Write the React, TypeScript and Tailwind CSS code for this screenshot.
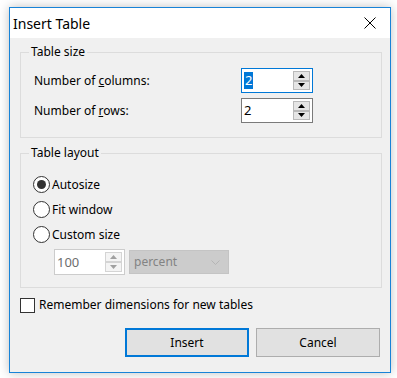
import React from 'react';

const font = { fontFamily: '"Noto Sans", "Open Sans", sans-serif' };

function Arrow({ up, disabled }: { up?: boolean; disabled?: boolean }) {
  return (
    <svg width="7" height="4" viewBox="0 0 7 4" aria-hidden>
      <path
        d={up ? 'M0 4L3.5 0L7 4Z' : 'M0 0L7 0L3.5 4Z'}
        fill={disabled ? '#a0a0a0' : '#000'}
      />
    </svg>
  );
}

function SpinBox({
  value,
  focused,
  disabled,
  className,
}: {
  value: string;
  focused?: boolean;
  disabled?: boolean;
  className?: string;
}) {
  const border = focused
    ? 'border-[#0078d7]'
    : disabled
      ? 'border-[#cccccc]'
      : 'border-[#7a7a7a]';
  return (
    <div className={`flex items-stretch bg-white border ${border} ${className ?? ''}`}>
      <div className="flex-1 flex items-center pl-[2px]">
        {focused ? (
          <span className="bg-[#0078d7] text-white text-[13px] leading-[17px] px-[1px]">{value}</span>
        ) : (
          <span className={`text-[13px] leading-[17px] ${disabled ? 'text-[#6d6d6d]' : 'text-black'}`}>
            {value}
          </span>
        )}
      </div>
      <div className="flex flex-col w-[17px] py-[2px] mr-[2px]">
        <div className={`flex-1 flex items-center justify-center border ${disabled ? 'border-[#d4d4d4] bg-[#f4f4f4]' : 'border-[#b9b9b9] bg-[#e5e5e5]'}`}>
          <Arrow up disabled={disabled} />
        </div>
        <div className={`flex-1 flex items-center justify-center border ${disabled ? 'border-[#d4d4d4] bg-[#f4f4f4]' : 'border-[#b9b9b9] bg-[#e5e5e5]'}`}>
          <Arrow disabled={disabled} />
        </div>
      </div>
    </div>
  );
}

function Radio({ label, checked }: { label: string; checked?: boolean }) {
  return (
    <div className="flex items-center h-[25px]">
      <div className="w-[17px] h-[17px] rounded-full border border-[#333333] bg-white flex items-center justify-center">
        {checked && <div className="w-[9px] h-[9px] rounded-full bg-[#333333]" />}
      </div>
      <span className="ml-[2px] text-[12px] text-black">{label}</span>
    </div>
  );
}

export default function App() {
  return (
    <div className="w-[397px] h-[378px] bg-white pl-[9px] pt-[7px]" style={font}>
      <div className="w-[382px] h-[366px] border border-[#1883d7] flex flex-col shadow-[0_0_10px_rgba(0,0,0,0.25)]">
        {/* title bar */}
        <div className="h-[30px] bg-white flex items-center justify-between pl-[3px] pr-[14px]">
          <span className="text-[14px] text-black">Insert Table</span>
          <svg width="12" height="12" viewBox="0 0 12 12" aria-hidden>
            <path d="M0.5 0.5L11.5 11.5M11.5 0.5L0.5 11.5" stroke="#000" strokeWidth="1" />
          </svg>
        </div>

        <div className="flex-1 bg-[#f0f0f0] px-[10px] pr-[8px] pt-[6px]">
          {/* table size */}
          <fieldset className="border border-[#dcdcdc] h-[94px]">
            <legend className="ml-[8px] px-[2px] text-[12px] text-black leading-[16px]">Table size</legend>
            <div className="pl-[13px] pr-[68px]">
              <div className="flex items-center justify-between mt-[8px]">
                <span className="text-[12px] text-black">
                  Number of <span className="underline">c</span>olumns:
                </span>
                <SpinBox value="2" focused className="w-[72px] h-[25px]" />
              </div>
              <div className="flex items-center justify-between mt-[5px]">
                <span className="text-[12px] text-black">
                  Number of <span className="underline">r</span>ows:
                </span>
                <SpinBox value="2" className="w-[72px] h-[25px]" />
              </div>
            </div>
          </fieldset>

          {/* table layout */}
          <fieldset className="border border-[#dcdcdc] h-[143px] mt-[7px]">
            <legend className="ml-[8px] px-[2px] text-[12px] text-black leading-[16px]">Table layout</legend>
            <div className="pl-[12px]">
              <div className="mt-[11px] flex flex-col">
                <Radio label="Autosize" checked />
                <Radio label="Fit window" />
                <Radio label="Custom size" />
              </div>
              <div className="flex items-center gap-[4px] ml-[21px] mt-[2px]">
                <SpinBox value="100" disabled className="w-[71px] h-[26px]" />
                <div className="w-[100px] h-[24px] bg-[#cccccc] border border-[#c4c4c4] flex items-center justify-between pl-[4px] pr-[8px]">
                  <span className="text-[12px] text-[#838383]">percent</span>
                  <svg width="9" height="5" viewBox="0 0 9 5" aria-hidden>
                    <path d="M0.5 0.5L4.5 4.5L8.5 0.5" stroke="#b5b5b5" fill="none" />
                  </svg>
                </div>
              </div>
            </div>
          </fieldset>

          {/* remember checkbox */}
          <div className="flex items-center mt-[8px]">
            <div className="w-[15px] h-[15px] border border-[#333333] bg-white" />
            <span className="ml-[4px] text-[12px] text-black">Remember dimensions for new tables</span>
          </div>

          {/* buttons */}
          <div className="flex justify-end gap-[7px] mt-[14px] pr-[2px]">
            <button className="w-[124px] h-[29px] bg-[#e1e1e1] border-2 border-[#0078d7] text-[12px] text-black">
              Insert
            </button>
            <button className="w-[124px] h-[29px] bg-[#e1e1e1] border border-[#adadad] text-[12px] text-black">
              Cancel
            </button>
          </div>
        </div>
      </div>
    </div>
  );
}
